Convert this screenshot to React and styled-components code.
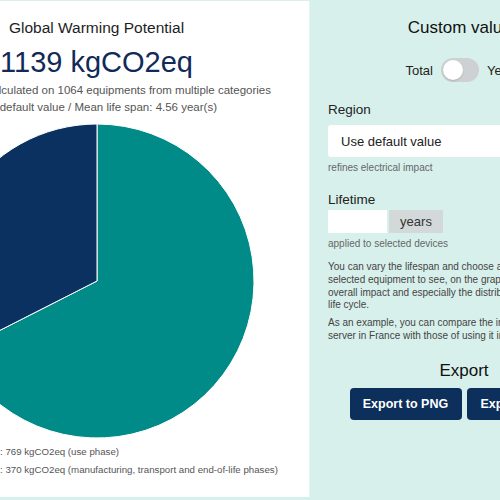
import React from "react";
import styled, { createGlobalStyle } from "styled-components";

const Global = createGlobalStyle`
  html, body { margin: 0; padding: 0; background: #d8f0eb; }
  body { width: 500px; height: 500px; overflow: hidden; font-family: "Liberation Sans", Arial, sans-serif; }
`;

const Viewport = styled.div`
  width: 500px;
  height: 500px;
  overflow: hidden;
  background: #d8f0eb;
`;

const Page = styled.div`
  display: flex;
  align-items: flex-start;
  width: 734px;
  margin-left: -116px;
  padding-top: 1px;
`;

const LeftPanel = styled.section`
  flex-shrink: 0;
  width: 425px;
  height: 496px;
  background: #ffffff;
  border-right: 1px solid #e6f3f1;
  display: flex;
  flex-direction: column;
  align-items: center;
  text-align: center;
`;

const Heading = styled.h2`
  flex-shrink: 0;
  margin: 17px 0 0;
  font-size: 15.5px;
  line-height: 20px;
  font-weight: 400;
  color: #1e1e1e;
`;

const BigValue = styled.div`
  flex-shrink: 0;
  margin-top: 8px;
  font-size: 29px;
  line-height: 32px;
  color: #122a58;
`;

const SubBlock = styled.div`
  flex-shrink: 0;
  margin-top: 3.5px;
`;

const SubLine = styled.div`
  font-size: 11.5px;
  line-height: 17px;
  color: #555;
  white-space: nowrap;
`;

const PieWrap = styled.div`
  flex-shrink: 0;
  margin-top: 7.5px;
  width: 316px;
  height: 316px;
  line-height: 0;
`;

const Legend = styled.div`
  flex-shrink: 0;
  align-self: flex-start;
  margin-top: 6px;
  display: flex;
  flex-direction: column;
  gap: 4px;
  text-align: left;
`;

const LegendRow = styled.div`
  display: flex;
  font-size: 9.7px;
  line-height: 14px;
  color: #555;
  white-space: nowrap;
`;

const LegendLabel = styled.span`
  width: 116px;
  text-align: right;
`;

const RightPanel = styled.section`
  flex-shrink: 0;
  width: 272px;
  padding: 17px 18px 0;
  display: flex;
  flex-direction: column;
  background: #d8f0eb;
`;

const PanelTitle = styled.h3`
  margin: ${(p) => p.$mt || 0}px 0 0;
  font-size: 17px;
  line-height: 20px;
  font-weight: 400;
  color: #111;
  text-align: center;
`;

const ToggleRow = styled.div`
  margin-top: 20px;
  display: flex;
  justify-content: center;
  align-items: center;
  gap: 8px;
  font-size: 13px;
  color: #222;
`;

const Switch = styled.span`
  width: 38px;
  height: 24px;
  border-radius: 12px;
  background: #cdd1d1;
  display: flex;
  align-items: center;
  padding: 0 2px;
  box-sizing: border-box;
`;

const Knob = styled.span`
  width: 20px;
  height: 20px;
  border-radius: 50%;
  background: #fff;
  box-shadow: 0 1px 2px rgba(0, 0, 0, 0.15);
`;

const FieldLabel = styled.label`
  margin-top: ${(p) => p.$mt}px;
  font-size: 13.5px;
  line-height: 17px;
  color: #222;
`;

const Select = styled.div`
  margin-top: 7px;
  height: 32px;
  width: 300px;
  background: #fff;
  border-radius: 3px;
  display: flex;
  align-items: center;
  padding-left: 13px;
  box-sizing: border-box;
  font-size: 13px;
  color: #222;
`;

const Help = styled.div`
  margin-top: 5px;
  font-size: 10px;
  line-height: 12px;
  color: #666;
`;

const InputRow = styled.div`
  margin-top: 2px;
  display: flex;
  gap: 2px;
  height: 23px;
`;

const TextInput = styled.div`
  width: 59px;
  background: #fff;
`;

const Addon = styled.div`
  width: 54px;
  background: #d2d9d8;
  display: flex;
  align-items: center;
  justify-content: center;
  font-size: 13px;
  color: #333;
`;

const Paragraph = styled.p`
  margin: ${(p) => p.$mt}px 0 0;
  font-size: 10px;
  line-height: 12.8px;
  color: #444;
  white-space: nowrap;
`;

const ButtonRow = styled.div`
  margin-top: 7px;
  display: flex;
  justify-content: center;
  gap: 5px;
`;

const Button = styled.button`
  width: 112px;
  height: 32px;
  border: none;
  border-radius: 4px;
  background: #0c2f5c;
  color: #fff;
  font-family: "Liberation Sans", Arial, sans-serif;
  font-weight: 700;
  font-size: 12.5px;
  padding: 0;
`;

const R = 157;
const C = 158;
const share = 769 / 1139;
const ang = share * 2 * Math.PI;
const ex = C + R * Math.sin(ang);
const ey = C - R * Math.cos(ang);

function Pie() {
  return (
    <svg width="316" height="316" viewBox="0 0 316 316">
      <path
        d={`M${C},${C} L${C},${C - R} A${R},${R} 0 1 1 ${ex},${ey} Z`}
        fill="#008a88"
        stroke="#fff"
        strokeWidth="1"
      />
      <path
        d={`M${C},${C} L${ex},${ey} A${R},${R} 0 0 1 ${C},${C - R} Z`}
        fill="#0b3160"
        stroke="#fff"
        strokeWidth="1"
      />
    </svg>
  );
}

export default function App() {
  return (
    <Viewport>
      <Global />
      <Page>
        <LeftPanel>
          <Heading>Global Warming Potential</Heading>
          <BigValue>1139 kgCO2eq</BigValue>
          <SubBlock>
            <SubLine>Total impact calculated on 1064 equipments from multiple categories</SubLine>
            <SubLine>Use default value / Mean life span: 4.56 year(s)</SubLine>
          </SubBlock>
          <PieWrap>
            <Pie />
          </PieWrap>
          <Legend>
            <LegendRow>
              <LegendLabel>Usage</LegendLabel>
              <span>: 769 kgCO2eq (use phase)</span>
            </LegendRow>
            <LegendRow>
              <LegendLabel>Embodied</LegendLabel>
              <span>: 370 kgCO2eq (manufacturing, transport and end-of-life phases)</span>
            </LegendRow>
          </Legend>
        </LeftPanel>
        <RightPanel>
          <PanelTitle>Custom values</PanelTitle>
          <ToggleRow>
            <span>Total</span>
            <Switch>
              <Knob />
            </Switch>
            <span>Yearly</span>
          </ToggleRow>
          <FieldLabel $mt={19}>Region</FieldLabel>
          <Select>Use default value</Select>
          <Help>refines electrical impact</Help>
          <FieldLabel $mt={17}>Lifetime</FieldLabel>
          <InputRow>
            <TextInput />
            <Addon>years</Addon>
          </InputRow>
          <Help>applied to selected devices</Help>
          <Paragraph $mt={11}>
            You can vary the lifespan and choose a region of use for the
            <br />
            selected equipment to see, on the graph, its influence on the
            <br />
            overall impact and especially the distribution over its
            <br />
            life cycle.
          </Paragraph>
          <Paragraph $mt={5}>
            As an example, you can compare the impact of using a
            <br />
            server in France with those of using it in Germany.
          </Paragraph>
          <PanelTitle $mt={18}>Export</PanelTitle>
          <ButtonRow>
            <Button>Export to PNG</Button>
            <Button>Export to CSV</Button>
          </ButtonRow>
        </RightPanel>
      </Page>
    </Viewport>
  );
}
